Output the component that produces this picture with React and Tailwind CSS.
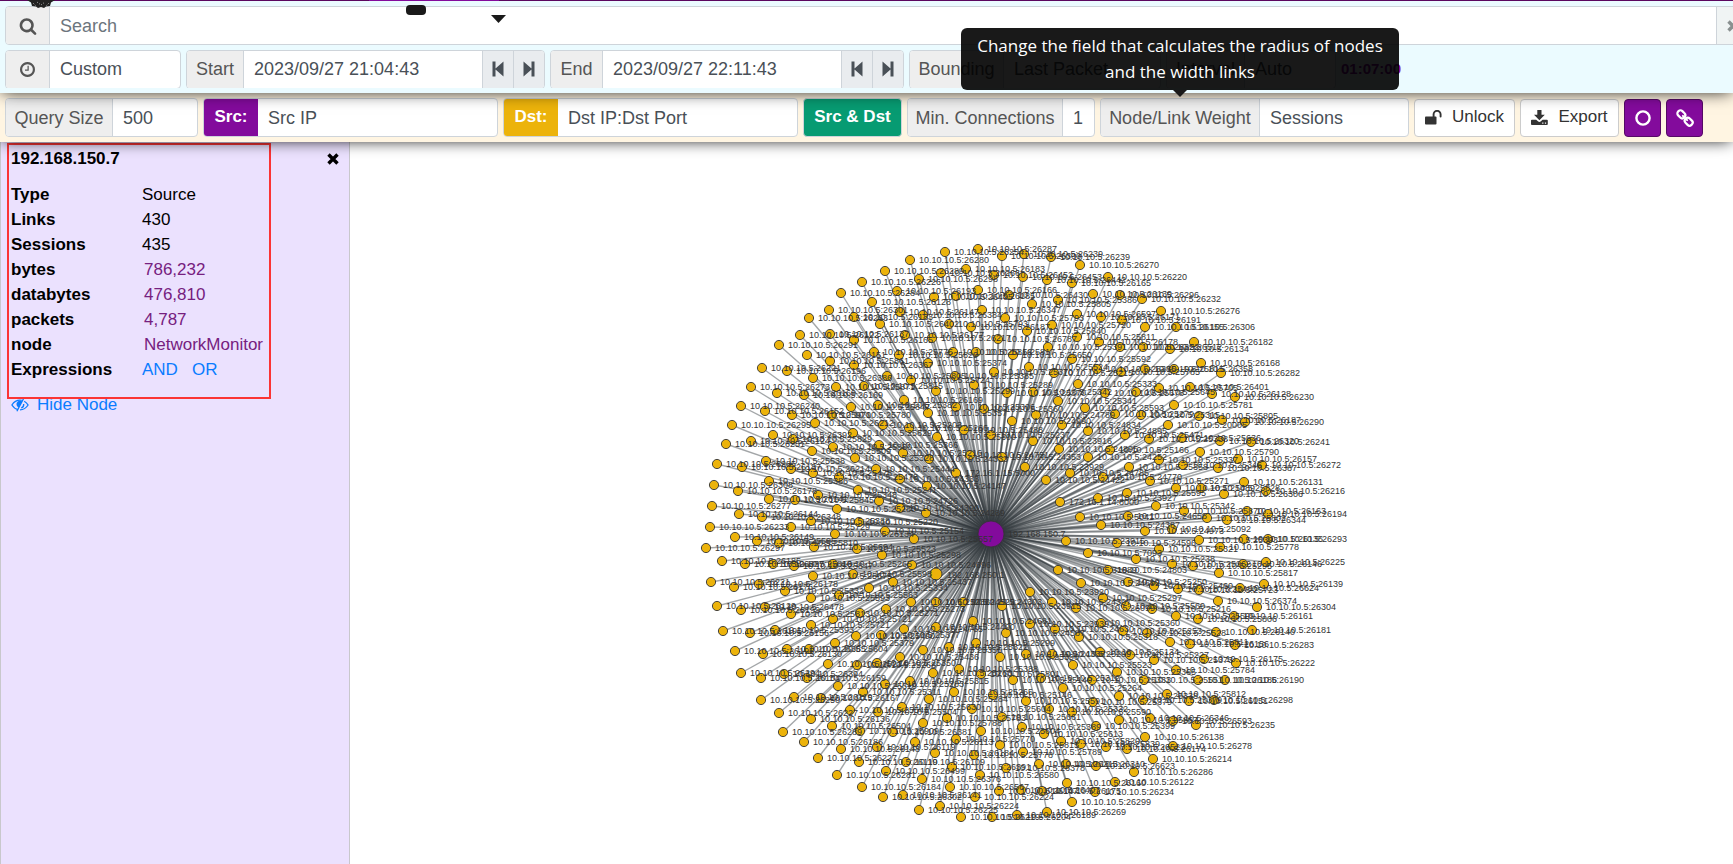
import React from "react";

const HUB = { x: 991, y: 534 };

// Each entry: x,y,port (a label that contains ":" is used as it stands)
const NODE_DATA = `
978,249,26287 1002,256,26300 945,252,26254 910,260,26280 885,271,26289 966,269,26183 941,273,26266 994,275,26452
919,279,26298 862,282,26226 841,293,26284 897,291,26193 978,290,26166 934,297,26405 956,296,26185 1009,295,26430
872,302,26128 829,310,26301 900,312,26147 982,310,26347 809,318,26263 854,317,26183 923,315,26384 880,324,26402
949,324,25793 971,327,26187 1005,318,25793 830,334,26137 800,335,26122 905,335,26177 854,340,26165 932,338,26217
998,339,26787 779,345,26291 807,355,26151 874,352,25775 899,355,25829 953,352,25816 976,352,25817 1013,355,25650
830,361,25861 854,365,26367 928,363,25374 994,372,25370 762,368,26221 787,371,26196 813,378,26386 887,376,25805
911,380,25724 955,376,25385 751,387,26273 777,393,26169 836,387,25871 864,386,25815 804,395,26169 974,385,25289
936,391,25299 1007,393,25370 741,406,26240 765,411,26152 792,415,25970 832,415,25780 851,407,25847 878,405,25382
904,400,26169 956,407,25306 928,413,25357 984,409,25360 732,425,26295 815,423,26212 883,425,25203 909,428,25266
1012,421,24990 853,433,25829 964,430,25488 773,435,26392 793,439,25829 751,441,26124 726,444,26251 833,447,25850
812,451,25509 879,445,25366 937,437,25300 991,435,25237 903,453,25216 855,458,25328 929,459,24333 970,455,24751
1002,457,24353 766,461,25538 717,464,26285 742,467,26187 791,469,26214 876,469,25444 813,473,25478 839,477,25478
956,473,172.16.1.15:5000 769,481,25386 900,479,24333 714,485,26308 927,486,24147 738,491,26178 818,495,25348
858,490,25241 769,499,26141 795,500,25845 879,501,24726 900,508,24390 712,506,26277 837,509,25280 739,514,26144
926,513,24289 762,517,26348 811,521,25388 859,522,25220 710,527,26233 791,527,25729 885,531,25154 835,534,26134
914,539,25557 735,537,26149 757,541,25595 779,543,25810 814,547,25694 857,549,25523 706,548,26297 882,555,25298
722,561,26185 745,564,26337 773,564,25816 794,566,25847 833,564,25265 912,565,24696 853,574,25598 813,576,25675
893,582,25437 711,582,26221 759,584,26178 734,587,26176 869,588,25334 785,591,25332 839,595,25563 811,598,25593
911,602,25236 936,602,24522 963,602,24303 1002,606,23915 717,606,26129 765,607,26478 741,610,26199 791,614,25813
886,609,25273 860,613,25271 833,619,25721 973,621,24681 811,625,25721 936,627,24490 904,629,24765 775,630,25393
723,631,26195 750,633,26156 856,636,25490 881,635,25377 835,643,25379 809,649,25604 787,649,26385 763,654,26130
735,651,26195 976,643,25299 949,647,25322 923,650,25356 1006,633,24587 900,657,25436 1000,657,25390 828,664,25214
857,665,25268 877,663,25350 959,669,25388 741,673,26294 784,674,26394 761,678,26154 807,678,26159 933,673,25263
981,674,25801 1013,680,25140 838,686,25319 910,681,25315 885,684,25283 863,692,25311 954,692,25265 993,695,25146
929,699,25284 794,697,26119 821,698,26167 761,700,26250 902,707,25630 850,710,25545 878,712,25504 972,709,25604
779,713,26227 811,719,26136 947,718,25783 923,723,25788 1002,717,25661 832,726,26504 860,731,25909 893,732,26381
981,731,25604 783,732,26289 804,742,26186 915,742,26113 956,739,25770 1000,745,25815 841,749,26148 877,747,26119
935,753,26184 818,758,26227 974,755,25778 859,762,26119 906,762,26109 886,771,26499 837,775,26281 952,767,26391
1006,768,26378 922,779,26376 980,775,26580 862,787,26184 950,787,26567 999,791,26147 883,797,26302 903,795,26141
975,797,26224 919,810,26225 940,806,26224 961,817,26219 992,817,26204 1017,815,26189 1024,254,26239 1051,257,26239
1080,265,26270 1023,277,26453 1047,280,26442 1072,283,26165 1108,277,26220 1032,304,25805 1058,300,25386
1093,294,26139 1120,295,26296 1142,299,26232 1161,311,26276 1077,314,26597 1101,317,26171 1122,320,26191
1052,325,25720 1027,331,25640 1145,327,26155 1176,327,26306 1077,337,25811 1099,342,26178 1194,342,26182
1170,349,26134 1143,347,26512 1120,347,26322 1048,347,25391 1072,359,25592 1029,367,25524 1201,363,26168
1221,373,26282 1054,373,25215 1097,369,25385 1121,372,25785 1145,369,25815 1174,369,26358 1078,384,25333
1033,392,25342 1105,393,25678 1136,392,25645 1159,388,25705 1190,387,26401 1212,394,26128 1235,397,26230
1058,401,25341 1085,408,25593 1174,405,25781 1036,415,24789 1115,414,25279 1141,415,25315 1199,416,25805
1222,420,26187 1245,422,26290 1168,425,20005 1062,425,24834 1088,431,24895 1033,441,23916 1059,449,24895
1125,435,25471 1149,439,25338 1182,438,25636 1220,441,26320 1251,442,26241 1088,457,24252 1110,450,25166
1200,452,25790 1159,460,25337 1025,467,23929 1070,473,24785 1046,480,24422 1103,477,24770 1129,467,25358
1183,465,25346 1218,468,26387 1238,459,26157 1262,465,26272 1150,481,25271 1176,488,25489 1201,488,25828
1127,493,25595 1098,498,23927 1060,502,172.16.1.14:8000 1224,494,26306 1244,482,26131 1266,491,26216
1156,506,25342 1080,517,5041 1128,516,24658 1101,525,24387 1184,511,25870 1207,518,25802 1227,520,26344
1247,511,26163 1268,514,26194 1145,531,24973 1172,529,25092 1066,541,23915 1117,543,24596 1199,540,25393
1244,539,26135 1268,539,26293 1159,549,25321 1220,547,25778 1088,553,7093 1136,559,25238 1172,564,25262
1193,566,25295 1243,564,26146 1266,562,26225 1058,570,31889 1108,570,24803 1219,573,25817 1081,583,24692
1128,582,25250 1154,586,25460 1030,592,23920 1178,589,25480 1199,590,25723 1240,588,26624 1264,584,26139
1103,598,25297 1052,602,24397 1076,608,26099 1126,606,25560 1152,609,25216 1218,601,26374 1257,607,26304
1176,616,25509 1198,619,25806 1234,616,26161 1030,624,23939 1101,623,25360 1055,629,24630 1252,630,26181
1123,631,25253 1147,633,25528 1079,637,25318 1216,632,26140 1170,642,25811 1190,644,26156 1235,645,26283
1026,654,24338 1052,654,25209 1100,652,25134 1130,655,25227 1154,660,25373 1204,659,26175 1236,663,26222
1073,665,25523 1117,672,25365 1176,670,25784 1041,678,25312 1092,680,25333 1144,680,25551 1198,680,26186
1225,680,26190 1063,688,25264 1026,701,25591 1119,696,25338 1167,694,25812 1143,700,25379 1189,701,26151
1214,700,26298 1093,702,25379 1049,709,25332 1072,712,25590 1022,727,25389 1150,718,26346 1119,720,25867
1173,721,26593 1196,725,26235 1096,726,25399 1044,734,25613 1061,741,25820 1145,737,26138 1081,744,25839
1106,747,26522 1127,749,26174 1173,746,26278 1023,752,25789 1153,759,26214 1039,764,26213 1066,764,26310
1096,766,26623 1134,772,26286 1115,782,26122 1067,783,26160 1021,790,26407 1042,791,26175 1095,792,26234
1072,802,26299 1047,812,26269
`
  .trim()
  .split(/\s+/)
  .map((entry) => {
    const [x, y, port] = entry.split(",");
    return {
      x: Number(x),
      y: Number(y),
      label: port.includes(":") ? port : `10.10.10.5:${port}`,
    };
  });

function Graph() {
  return (
    <svg
      className="absolute top-0 left-0 h-[722px] w-[1733px] font-['Liberation_Sans',sans-serif] text-[9px]"
      role="img"
      aria-label="Connections"
    >
      <g transform="translate(0 -142)">
        <g stroke="#333a3f" strokeOpacity="0.45" strokeWidth="1.4">
          {NODE_DATA.map((n, i) => (
            <line key={i} x1={HUB.x} y1={HUB.y} x2={n.x} y2={n.y} />
          ))}
          <line x1={HUB.x} y1={HUB.y} x2="936" y2="574" />
        </g>
        <g fill="#ecb30b" stroke="#333" strokeWidth="0.9">
          {NODE_DATA.map((n, i) => (
            <circle key={i} cx={n.x} cy={n.y} r="4.6" />
          ))}
          <circle cx="936" cy="574" r="6" />
        </g>
        <circle cx={HUB.x} cy={HUB.y} r="13" fill="#830b9c" stroke="#333" strokeWidth="0.8" />
        <g fill="#333">
          {NODE_DATA.map((n, i) => (
            <text key={i} x={n.x + 9} y={n.y + 3}>
              {n.label}
            </text>
          ))}
          <text x="947" y="578">192.168.250.1</text>
          <text x="1008" y="537">192.168.150.7</text>
        </g>
      </g>
    </svg>
  );
}

function SearchIcon() {
  return (
    <svg viewBox="0 0 1792 1792" className="h-[18px] w-[18px]" fill="currentColor" aria-hidden="true">
      <path d="M1216 832q0-185-131.500-316.500T768 384 451.500 515.500 320 832t131.500 316.500T768 1280t316.500-131.500T1216 832z m512 832q0 52-38 90t-90 38q-54 0-90-38l-343-342q-179 124-399 124-143 0-273.500-55.500t-225-150-150-225T64 832t55.500-273.500 150-225 225-150T768 128t273.500 55.500 225 150 150 225T1472 832q0 220-124 399l343 343q37 37 37 90z" />
    </svg>
  );
}

function ClockIcon() {
  return (
    <svg viewBox="0 128 1536 1536" className="h-[15px] w-[15px]" fill="currentColor" aria-hidden="true">
      <path d="M896 544v448q0 14-9 23t-23 9H544q-14 0-23-9t-9-23v-64q0-14 9-23t23-9h224V544q0-14 9-23t23-9h64q14 0 23 9t9 23zm416 352q0-148-73-273t-198-198-273-73-273 73-198 198-73 273 73 273 198 198 273 73 273-73 198-198 73-273zm224 0q0 209-103 385.500T1153.500 1561 768 1664t-385.500-103T103 1281.500 0 896t103-385.500T382.500 231 768 128t385.500 103T1433 510.500 1536 896z" />
    </svg>
  );
}

function StepIcon({ forward }) {
  return (
    <svg viewBox="0 0 12 16" className="h-4 w-3" fill="currentColor" aria-hidden="true">
      {forward ? (
        <path d="M0.500 0.500 L8.500 7.500 V0.500 H11.500 V15.500 H8.500 V8.500 L0.500 15.500 Z" />
      ) : (
        <path d="M11.500 0.500 L3.500 7.500 V0.500 H0.500 V15.500 H3.500 V8.500 L11.500 15.500 Z" />
      )}
    </svg>
  );
}

function TimesIcon() {
  return (
    <svg viewBox="0 0 12 12" className="h-3 w-3" stroke="currentColor" strokeWidth="3.400" aria-hidden="true">
      <path d="M1.500 1.500 L10.500 10.500 M10.500 1.500 L1.500 10.500" />
    </svg>
  );
}

function UnlockIcon() {
  return (
    <svg viewBox="0 0 17 15" className="h-[15px] w-[17px]" aria-hidden="true">
      <rect x="0" y="6.500" width="11.500" height="8" rx="0.900" fill="currentColor" />
      <path d="M8.600 7 V4.300 a3.500 3.500 0 0 1 7 0 V6.500" fill="none" stroke="currentColor" strokeWidth="1.900" strokeLinecap="round" />
    </svg>
  );
}

function DownloadIcon() {
  return (
    <svg viewBox="0 0 17 16" className="h-4 w-[17px]" fill="currentColor" aria-hidden="true">
      <path d="M6.300 0 h4.200 v4.800 h3.300 L8.400 10.200 L3 4.800 h3.300 Z" />
      <path fillRule="evenodd" d="M0.900 9.700 H5.200 L7.200 11.600 Q8.400 12.500 9.600 11.600 L11.600 9.700 H15.900 Q16.800 9.700 16.800 10.600 V14.100 Q16.800 15 15.900 15 H0.900 Q0 15 0 14.100 V10.600 Q0 9.700 0.900 9.700 Z M11.200 12.600 V13.800 H12.400 V12.600 Z M13.900 12.600 V13.800 H15.100 V12.600 Z" />
    </svg>
  );
}

function LinkIcon() {
  return (
    <svg viewBox="0 0 18 18" className="h-[18px] w-[18px]" fill="none" stroke="currentColor" strokeWidth="2.200" aria-hidden="true">
      <g transform="rotate(45 9 9)">
        <rect x="-0.400" y="6" width="8.400" height="6" rx="2.700" />
        <rect x="10" y="6" width="8.400" height="6" rx="2.700" />
        <path d="M6 9 H12" strokeLinecap="round" strokeWidth="2" />
      </g>
    </svg>
  );
}

function EyeSlashIcon() {
  return (
    <svg viewBox="0 0 18 14" className="h-[14px] w-[18px]" fill="none" stroke="currentColor" strokeWidth="1.300" aria-hidden="true">
      <path d="M7 11.600 Q3.300 10.800 0.900 7 Q4 2.200 9 2.200 Q10 2.200 10.800 2.400" />
      <path d="M13.200 3.300 Q15.600 4.600 17.100 7 Q14 11.800 9 11.800" />
      <path d="M5.600 5 Q5 8.200 7.700 9.700 L11.200 3.200 Q7 1.800 5.600 5 Z" fill="currentColor" stroke="none" />
      <path d="M12.700 6 Q13 9 10.200 10" />
      <path d="M12.500 0.800 L5.900 13.200" />
    </svg>
  );
}

const group = "flex h-[39px] shrink-0 overflow-hidden rounded border border-[#ced4da] bg-white text-[#495057]";
const addon = "flex shrink-0 items-center justify-center border-r border-[#ced4da] bg-[#eeeeee] text-[#555]";
const field = "min-w-0 appearance-none bg-transparent px-2.5 text-[#495057] outline-none";
const step = "flex w-[31px] shrink-0 items-center justify-center border-l border-[#ced4da] bg-[#e9ecef] text-[#495057]";

function DateGroup({ label, id, value, labelClass }) {
  return (
    <div className={group}>
      <label htmlFor={id} className={`${addon} ${labelClass}`}>
        {label}
      </label>
      <input id={id} defaultValue={value} className={`${field} w-[238px]`} />
      <button type="button" aria-label={`${label} back`} className={step}>
        <StepIcon />
      </button>
      <button type="button" aria-label={`${label} forward`} className={step}>
        <StepIcon forward />
      </button>
    </div>
  );
}

function Header() {
  return (
    <header className="relative z-20 bg-[#ebfbff] pb-[5px] shadow-[0_0_16px_-2px_#000]">
      <div className="flex h-px bg-[#5b075f] pl-[369px]">
        <div className="w-[130px] bg-[#830b9c]" />
      </div>
      <svg className="absolute top-0 left-[27px] h-2 w-7" viewBox="0 0 28 8" aria-hidden="true">
        <path d="M0 0 H28 L24 2.500 L23 6 L19 6.500 L17 8 L14 7 L11 8 L9 6.500 L5 6 L4 2.500 Z" fill="#222" />
        <path d="M6 3 l3 3 M10 2 l4 3 l4 -3 M22 3 l-3 3" stroke="#aaa" fill="none" strokeDasharray="1 1.500" />
      </svg>
      <div className="absolute top-[5px] left-[406px] h-[10px] w-5 rounded bg-[#1a1a1a]" />
      <svg className="absolute top-[15px] left-[491px] h-2 w-[15px]" viewBox="0 0 15 8" aria-hidden="true">
        <path d="M0 0 H15 L7.500 8 Z" fill="#1a1a1a" />
      </svg>

      <div className="flex flex-col gap-[5px] overflow-hidden pt-[5px] pl-[5px]">
        <div className={`${group} -mr-6`}>
          <label htmlFor="search" className={`${addon} w-[44px]`}>
            <SearchIcon />
          </label>
          <input id="search" placeholder="Search" className={`${field} flex-1 placeholder:text-[#6c757d]`} />
          <button
            type="button"
            aria-label="Clear search"
            className="flex w-[40px] items-center border-l border-[#ced4da] bg-[#f0f4f4] pl-2.5 text-[#8a9090]"
          >
            <TimesIcon />
          </button>
        </div>

        <div className="flex h-[38px] items-center gap-[5px]">
          <div className={group}>
            <label htmlFor="range" className={`${addon} w-[44px]`}>
              <ClockIcon />
            </label>
            <select id="range" aria-label="Time range" className={`${field} w-[130px]`}>
              <option>Custom</option>
            </select>
          </div>
          <DateGroup label="Start" id="start" value="2023/09/27 21:04:43" labelClass="w-[57px]" />
          <DateGroup label="End" id="end" value="2023/09/27 22:11:43" labelClass="w-[52px]" />
          <div className={group}>
            <label htmlFor="bounding" className={`${addon} w-[94px]`}>
              Bounding
            </label>
            <select id="bounding" className={`${field} w-[156px]`}>
              <option>Last Packet</option>
            </select>
          </div>
          <div className={group}>
            <label htmlFor="interval" className={`${addon} w-[78px]`}>
              Interval
            </label>
            <select id="interval" className={`${field} w-[90px]`}>
              <option>Auto</option>
            </select>
          </div>
          <strong className="text-[15px] text-[#830b9c]">01:07:00</strong>
        </div>
      </div>
    </header>
  );
}

const plain = "flex h-[38px] items-center justify-center gap-2.5 rounded border border-[#ccc] bg-white text-[17px] text-[#333]";
const purple = "flex h-[38px] w-[37px] items-center justify-center rounded border border-[#560a66] bg-[#830b9c] text-white";

function Toolbar() {
  return (
    <div className="relative z-10 bg-[#fff5e2] shadow-[0_0_16px_-2px_#000]">
      <form className="flex items-center gap-[5px] py-[5px] pl-[5px]">
        <div className={group}>
          <label htmlFor="size" className={`${addon} w-[107px]`}>
            Query Size
          </label>
          <select id="size" className={`${field} w-[84px]`}>
            <option>500</option>
          </select>
        </div>
        <div className={group}>
          <label htmlFor="src" className="flex w-[54px] items-center justify-center bg-[#830b9c] text-[17px] font-bold text-white">
            Src:
          </label>
          <input id="src" defaultValue="Src IP" className={`${field} w-[239px]`} />
        </div>
        <div className={group}>
          <label htmlFor="dst" className="flex w-[54px] items-center justify-center bg-[#ecb30b] text-[17px] font-bold text-white">
            Dst:
          </label>
          <input id="dst" defaultValue="Dst IP:Dst Port" className={`${field} w-[239px]`} />
        </div>
        <button type="button" className="h-[39px] w-[99px] shrink-0 rounded border border-[#ced4da] bg-[#079b72] text-[17px] font-bold text-white">
          Src &amp; Dst
        </button>
        <div className={group}>
          <label htmlFor="min" className={`${addon} w-[155px]`}>
            Min. Connections
          </label>
          <input id="min" defaultValue="1" className={`${field} w-[31px]`} />
        </div>
        <div className={group}>
          <label htmlFor="weight" className={`${addon} w-[159px]`}>
            Node/Link Weight
          </label>
          <select id="weight" className={`${field} w-[148px]`}>
            <option>Sessions</option>
          </select>
        </div>
        <button type="button" className={`${plain} w-[101px]`}>
          <UnlockIcon />
          Unlock
        </button>
        <button type="button" className={`${plain} w-[99px]`}>
          <DownloadIcon />
          Export
        </button>
        <button type="button" aria-label="Node distance" className={purple}>
          <svg viewBox="0 0 16 16" className="h-4 w-4" fill="none" stroke="currentColor" strokeWidth="2.400" aria-hidden="true">
            <circle cx="8" cy="8" r="6.600" />
          </svg>
        </button>
        <button type="button" aria-label="Link distance" className={purple}>
          <LinkIcon />
        </button>
      </form>
    </div>
  );
}

function Tooltip() {
  return (
    <div role="tooltip" className="absolute top-[28px] left-[961px] z-30 w-[438px]">
      <p className="rounded-md bg-black/90 px-4 py-[5px] text-center font-['Open_Sans','Noto_Sans',sans-serif] text-[17px] leading-[26px] whitespace-nowrap text-white">
        Change the field that calculates the radius of nodes
        <br />
        and the width links
      </p>
      <svg className="mx-auto h-[7px] w-[14px]" viewBox="0 0 14 7" aria-hidden="true">
        <path d="M0 0 H14 L7 7 Z" fill="#1a1a1a" />
      </svg>
    </div>
  );
}

const facts = [
  ["Type", "Source", false],
  ["Links", "430", false],
  ["Sessions", "435", false],
  ["bytes", "786,232", true],
  ["databytes", "476,810", true],
  ["packets", "4,787", true],
  ["node", "NetworkMonitor", true],
];

function NodePanel() {
  return (
    <aside className="relative w-[350px] shrink-0 border-x border-[#c8c8cc] bg-[#ebe1fe] pr-2.5 pl-2.5 text-[17px] text-black">
      <div className="absolute top-px left-[6px] h-[256px] w-[264px] border-2 border-[#fb3434]" />
      <div className="flex items-center justify-between pt-[5px] leading-6">
        <strong>192.168.150.7</strong>
        <button type="button" aria-label="Close">
          <TimesIcon />
        </button>
      </div>
      <dl className="mt-[11px] grid grid-cols-[131px_1fr] leading-[25px]">
        {facts.map(([name, value, linked]) => (
          <React.Fragment key={name}>
            <dt className="font-bold">{name}</dt>
            <dd>
              {linked ? (
                <a href="#value" className="px-0.5 text-[#76207f]">
                  {value}
                </a>
              ) : (
                value
              )}
            </dd>
          </React.Fragment>
        ))}
        <dt className="font-bold">Expressions</dt>
        <dd className="flex gap-3.5 text-[#0a7cff]">
          <a href="#and">AND</a>
          <a href="#or">OR</a>
        </dd>
      </dl>
      <a href="#hide" className="mt-[10px] flex items-center gap-2 leading-[25px] text-[#0a7cff]">
        <EyeSlashIcon />
        Hide Node
      </a>
    </aside>
  );
}

export default function App() {
  return (
    <div className="relative flex min-h-screen flex-col overflow-hidden bg-white font-['Liberation_Sans',sans-serif] text-lg">
      <Header />
      <Toolbar />
      <Tooltip />
      <main className="relative flex flex-1">
        <Graph />
        <NodePanel />
      </main>
    </div>
  );
}
